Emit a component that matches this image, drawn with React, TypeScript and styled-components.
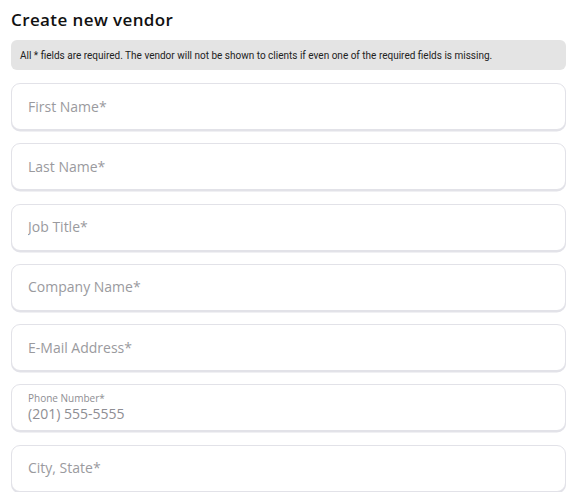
import React from 'react';
import styled, { createGlobalStyle } from 'styled-components';

const GlobalStyle = createGlobalStyle`
  body {
    margin: 0;
    background: #fff;
    font-family: 'Open Sans', 'Liberation Sans', sans-serif;
  }
`;

const Page = styled.div`
  padding: 8px 10px 0 11px;
`;

const Title = styled.h1`
  margin: 0 0 8px;
  font-size: 17px;
  line-height: 24px;
  font-weight: 600;
  color: #111;
  letter-spacing: 0.4px;
`;

const Notice = styled.div`
  background: #e4e4e4;
  border-radius: 6px;
  padding: 0 9px;
  height: 30px;
  display: flex;
  align-items: center;
  font-family: Roboto, 'Liberation Sans', sans-serif;
  font-size: 10px;
  color: #222;
  margin-bottom: 13px;
`;

const Fields = styled.div`
  display: flex;
  flex-direction: column;
  gap: 13.3px;
`;

const FieldBox = styled.label`
  box-sizing: border-box;
  height: 47px;
  border: 1px solid #e2e2e8;
  border-radius: 9px;
  box-shadow: 0 1.5px 0 #e2e2e8;
  padding: 0 16px;
  display: flex;
  flex-direction: column;
  justify-content: center;
  background: #fff;
`;

const SmallLabel = styled.span`
  font-size: 10px;
  line-height: 12px;
  color: #8e8e93;
  margin-top: 1px;
`;

const Input = styled.input`
  border: none;
  outline: none;
  padding: 0;
  font-family: inherit;
  font-size: 14px;
  line-height: 20px;
  color: #8e8e93;
  background: transparent;

  &::placeholder {
    color: #9a9a9e;
  }
`;

const fields = [
  { placeholder: 'First Name*' },
  { placeholder: 'Last Name*' },
  { placeholder: 'Job Title*' },
  { placeholder: 'Company Name*' },
  { placeholder: 'E-Mail Address*' },
  { label: 'Phone Number*', value: '(201) 555-5555' },
  { placeholder: 'City, State*' },
];

export default function App() {
  return (
    <Page>
      <GlobalStyle />
      <Title>Create new vendor</Title>
      <Notice>
        All * fields are required. The vendor will not be shown to clients if even one of the required fields is missing.
      </Notice>
      <Fields>
        {fields.map((f, i) =>
          f.label ? (
            <FieldBox key={i}>
              <SmallLabel>{f.label}</SmallLabel>
              <Input defaultValue={f.value} />
            </FieldBox>
          ) : (
            <FieldBox key={i}>
              <Input placeholder={f.placeholder} />
            </FieldBox>
          )
        )}
      </Fields>
    </Page>
  );
}
